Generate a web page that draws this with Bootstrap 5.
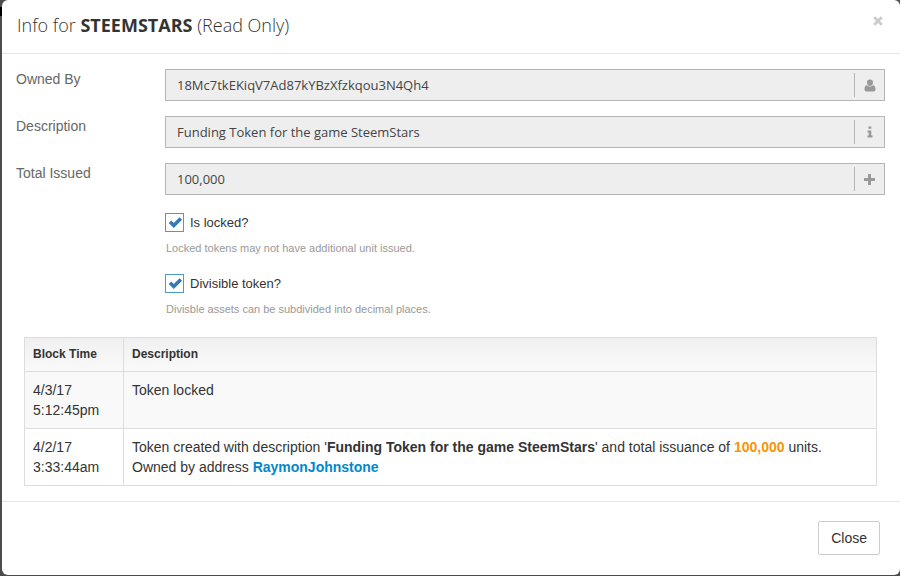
<!DOCTYPE html>
<html lang="en">
<head>
<meta charset="utf-8">
<meta name="viewport" content="width=device-width, initial-scale=1">
<title>Info for STEEMSTARS</title>
<link href="https://cdn.jsdelivr.net/npm/bootstrap@5.3.0/dist/css/bootstrap.min.css" rel="stylesheet">
<style>
body { background: #4c4c4c; font: 14px/20px "Liberation Sans", Arial, sans-serif; color: #333; }
.page-shell { min-height: 100vh; padding: 0 0 1px 2px; background: linear-gradient(#4c4c4c 7px, #000 7px 16px, #4c4c4c 16px); }
.info-dialog { min-height: calc(100vh - 1px); border: 0; border-radius: 6px; color: #333; background: #fff; }
.info-dialog .modal-header { padding: 10px 15px 13px; border-bottom: 1px solid #e5e5e5; }
.info-dialog .modal-title { font: 300 18px/30px "Open Sans", sans-serif; }
.info-dialog .modal-title strong { font-weight: 700; }
.info-dialog .modal-body { padding: 15px 15px 15px 14px; flex: 0 0 auto; }
.info-dialog .modal-footer { padding: 19px 20px 20px; border-top: 1px solid #e5e5e5; }
.dismiss { width: 14px; height: 14px; color: #ccc; margin: 0 0 8px; }
.token-fields { display: grid; grid-template-columns: 149px 1fr; row-gap: 15px; }
.token-fields label.side { color: #666; }
.token-fields .form-control { height: 32px; padding: 4px 11px; background: #eee; border: 0; border-radius: 0; font: 13px/20px "Open Sans", sans-serif; color: #444; }
.field-box { background: #eee; border: 1px solid #b5b5b5; }
.field-box .form-control { height: 30px; }
.field-icon { width: 30px; height: 24px; border-left: 1px solid #b5b5b5; color: #999; }
.flag-list { grid-column: 2; padding-top: 2px; }
.flag-row { gap: 6px; }
.flag-list .form-check-input { width: 19px; height: 19px; margin: 0; border: 1px solid #4a9cc7; border-radius: 0; background-color: #fff; background-size: 17px 17px; background-image: url("data:image/svg+xml,%3Csvg xmlns='http://www.w3.org/2000/svg' viewBox='0 0 17 17'%3E%3Cpath d='M4 7.700L7.800 11.500 14.800 4.500' fill='none' stroke='%23337ab7' stroke-width='3.6'/%3E%3C/svg%3E"); }
.flag-list label { font-size: 13px; line-height: 21px; }
.flag-note { font-size: 11px; line-height: 20px; color: #999; margin: 5px 0 15px 1px; }
.history { width: calc(100% - 16px); margin: 18px 8px 0; border-color: #ddd; color: #333; }
.history > :not(caption) > * > * { padding: 8px; color: #333; }
.history thead th { font-size: 12px; line-height: 17px; vertical-align: middle; }
.history thead { background: linear-gradient(#f0f0f0, #fafafa); }
.history > thead > tr > th { background: transparent; }
.history > tbody > tr:first-child > td { background: #f9f9f9; }
.history .when { width: 99px; }
.history .amount { color: #f89406; }
.history a { color: #08c; }
.close-btn { font-size: 14px; line-height: 20px; padding: 6px 12px; margin: 0; border: 1px solid #ccc; border-radius: 2px; color: #333; background: #fff; }
</style>
<script src="https://cdn.jsdelivr.net/npm/bootstrap@5.3.0/dist/js/bootstrap.bundle.min.js"></script>
</head>
<body>
<main class="page-shell">
<section class="modal-content info-dialog" role="dialog" aria-labelledby="dialog-title">
  <header class="modal-header">
    <h1 class="modal-title" id="dialog-title">Info for <strong>STEEMSTARS</strong> (Read Only)</h1>
    <button type="button" class="btn dismiss p-0 border-0 d-flex align-items-center justify-content-center" aria-label="Close">
      <svg width="10" height="10" viewBox="0 0 10 10" aria-hidden="true"><path d="M1.2 1.2l7.6 7.6M8.800 1.2L1.200 8.800" stroke="currentColor" stroke-width="2.8"/></svg>
    </button>
  </header>
  <div class="modal-body">
    <form class="token-fields">
      <label class="side" for="owner">Owned By</label>
      <div class="field-box d-flex align-items-center">
        <input class="form-control" id="owner" type="text" value="18Mc7tkEKiqV7Ad87kYBzXfzkqou3N4Qh4" readonly>
        <span class="field-icon d-flex flex-shrink-0 align-items-center justify-content-center">
          <svg width="12" height="13" viewBox="0 0 12 13" fill="currentColor" aria-hidden="true"><path d="M6 .5a3 3 0 0 1 3 3.200C9 5.500 7.700 7 6 7S3 5.500 3 3.700A3 3 0 0 1 6 .5z"/><path d="M3 6.200C1.200 6.300.5 8 .5 10.300.5 11.700 1.300 12.500 2.500 12.500h7c1.200 0 2-.8 2-2.200C11.500 8 10.800 6.300 9 6.200 7.400 8 4.600 8 3 6.200z"/></svg>
        </span>
      </div>
      <label class="side" for="about">Description</label>
      <div class="field-box d-flex align-items-center">
        <input class="form-control" id="about" type="text" value="Funding Token for the game SteemStars" readonly>
        <span class="field-icon d-flex flex-shrink-0 align-items-center justify-content-center">
          <svg width="6" height="12" viewBox="0 0 6 12" fill="currentColor" aria-hidden="true"><path d="M1.500.5h2.800v2.200H1.500zM.5 4.500h3.800v5h1.200v2H.5v-2h1.200v-3H.5z"/></svg>
        </span>
      </div>
      <label class="side" for="issued">Total Issued</label>
      <div class="field-box d-flex align-items-center">
        <input class="form-control" id="issued" type="text" value="100,000" readonly>
        <span class="field-icon d-flex flex-shrink-0 align-items-center justify-content-center">
          <svg width="11" height="11" viewBox="0 0 11 11" fill="currentColor" aria-hidden="true"><path d="M4.500 0h2q.5 0 .5.5V4h3.500q.5 0 .5.5v2q0 .5-.5.5H7v3.500q0 .5-.5.5h-2q-.5 0-.5-.5V7H.5Q0 7 0 6.500v-2Q0 4 .5 4H4V.5q0-.5.5-.5z"/></svg>
        </span>
      </div>
      <div class="flag-list">
        <div class="d-flex align-items-center flag-row">
          <input class="form-check-input" type="checkbox" id="locked" checked>
          <label for="locked">Is locked?</label>
        </div>
        <p class="flag-note">Locked tokens may not have additional unit issued.</p>
        <div class="d-flex align-items-center flag-row">
          <input class="form-check-input" type="checkbox" id="divisible" checked>
          <label for="divisible">Divisible token?</label>
        </div>
        <p class="flag-note mb-0">Divisble assets can be subdivided into decimal places.</p>
      </div>
    </form>
    <table class="table table-bordered history mb-0">
      <thead>
        <tr><th class="when" scope="col">Block Time</th><th scope="col">Description</th></tr>
      </thead>
      <tbody>
        <tr><td>4/3/17<br>5:12:45pm</td><td>Token locked</td></tr>
        <tr><td>4/2/17<br>3:33:44am</td><td>Token created with description '<strong>Funding Token for the game SteemStars</strong>' and total issuance of <strong class="amount">100,000</strong> units.<br>Owned by address <a class="fw-bold text-decoration-none" href="#">RaymonJohnstone</a></td></tr>
      </tbody>
    </table>
  </div>
  <footer class="modal-footer">
    <button type="button" class="btn close-btn">Close</button>
  </footer>
</section>
</main>
</body>
</html>
